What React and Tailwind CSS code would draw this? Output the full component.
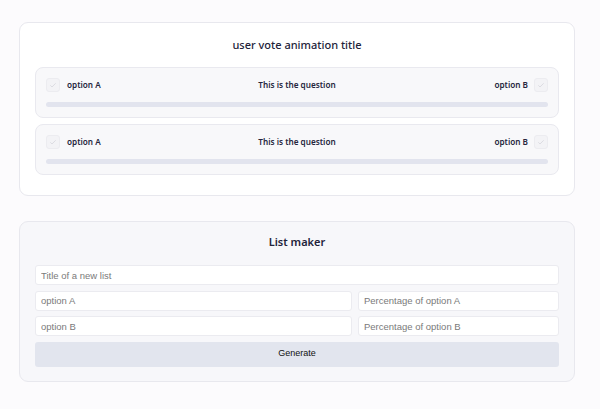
import React from 'react';

const Check = () => (
    <div className="w-[14px] h-[14px] rounded-[3px] border border-[#ececf0] bg-[#f3f3f6] flex items-center justify-center">
        <svg viewBox="0 0 12 12" className="w-[8px] h-[8px]" fill="none" stroke="#dcdce2" strokeWidth="1.5">
            <path d="M2 6.5l2.5 2.5L10 3.5" />
        </svg>
    </div>
);

const VoteRow = () => (
    <div className="border border-[#e9e9ef] rounded-[8px] bg-[#f8f8fa] px-[10px] pt-[9px] pb-[10px]">
        <div className="flex items-center justify-between h-[16px] text-[8.2px] font-semibold text-[#26263d]">
            <div className="flex items-center gap-[7px] w-[120px]">
                <Check />
                <span>option A</span>
            </div>
            <span>This is the question</span>
            <div className="flex items-center justify-end gap-[6px] w-[120px]">
                <span>option B</span>
                <Check />
            </div>
        </div>
        <div className="mt-[9px] h-[5px] rounded-full bg-[#e2e4ee]" />
    </div>
);

const inputCls = 'h-[20px] border border-[#ebebf0] rounded-[3px] bg-white px-[5px] text-[9.5px] text-[#777] placeholder:text-[#7a7a7a] outline-none';

export default function App() {
    return (
        <div className="min-h-[409px] bg-[#fcfbfd] pt-[22px] pl-[19px] pr-[25px] pb-[28px]" style={{ fontFamily: '"Noto Sans", sans-serif' }}>
            <div className="border border-[#e8e8ee] rounded-[9px] bg-white px-[15px] pt-[13px] pb-[20px]">
                <h1 className="text-center text-[11px] font-medium text-[#23233a] leading-[18px] mb-[13px]">user vote animation title</h1>
                <div className="flex flex-col gap-[6px]">
                    <VoteRow />
                    <VoteRow />
                </div>
            </div>

            <div className="mt-[25px] border border-[#e8e8ee] rounded-[9px] bg-[#f7f7fa] px-[15px] pt-[11px] pb-[14px]">
                <h2 className="text-center text-[11px] font-semibold text-[#23233a] leading-[18px] mb-[14px]">List maker</h2>
                <div className="flex flex-col gap-[5.5px]" style={{ fontFamily: '"Liberation Sans", Arial, sans-serif' }}>
                    <input className={inputCls} placeholder="Title of a new list" />
                    <div className="flex gap-[6px]">
                        <input className={inputCls + ' w-[317px]'} placeholder="option A" />
                        <input className={inputCls + ' flex-1 min-w-0'} placeholder="Percentage of option A" />
                    </div>
                    <div className="flex gap-[6px]">
                        <input className={inputCls + ' w-[317px]'} placeholder="option B" />
                        <input className={inputCls + ' flex-1 min-w-0'} placeholder="Percentage of option B" />
                    </div>
                    <button className="h-[25px] rounded-[3px] bg-[#e2e5ee] text-[9px] text-[#111]">Generate</button>
                </div>
            </div>
        </div>
    );
}
